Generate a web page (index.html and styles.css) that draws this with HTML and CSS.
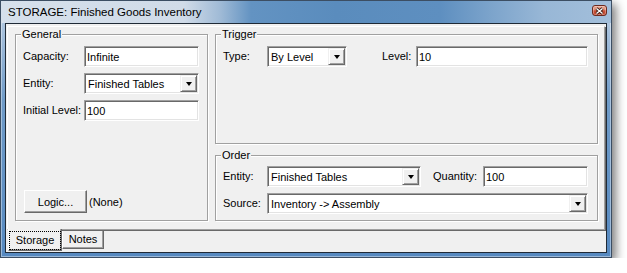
FILE: index.html
```html
<!DOCTYPE html>
<html lang="en">
<head>
<meta charset="UTF-8">
<meta name="viewport" content="width=device-width, initial-scale=1.0">
<title>STORAGE: Finished Goods Inventory</title>
<link rel="stylesheet" href="styles.css">
</head>
<body>
<div class="window">
  <div class="titlebar">
    <span class="title">STORAGE: Finished Goods Inventory</span>
    <div class="close-btn">
      <svg width="9" height="8" viewBox="0 0 9 8">
        <path d="M1.5 1.5 L7.5 6.5 M7.5 1.5 L1.5 6.5" stroke="#3a1a12" stroke-width="3" fill="none"/>
        <path d="M1.5 1.5 L7.5 6.5 M7.5 1.5 L1.5 6.5" stroke="#fff" stroke-width="1.4" fill="none"/>
      </svg>
    </div>
  </div>

  <div class="client">
    <div class="page">
      <div class="group general">
        <span class="group-label">General</span>
        <div class="row">
          <label class="lbl lbl-general">Capacity:</label>
          <input class="field" type="text" value="Infinite" style="width: 115px">
        </div>
        <div class="row">
          <label class="lbl lbl-general">Entity:</label>
          <div class="combo" style="width: 115px">
            <span class="combo-text">Finished Tables</span>
            <span class="combo-btn"><i class="arrow"></i></span>
          </div>
        </div>
        <div class="row">
          <label class="lbl lbl-general">Initial Level:</label>
          <input class="field" type="text" value="100" style="width: 115px">
        </div>
        <div class="logic-row">
          <button class="btn">Logic...</button>
          <span class="none-text">(None)</span>
        </div>
      </div>

      <div class="right-col">
        <div class="group trigger">
          <span class="group-label">Trigger</span>
          <div class="row">
            <label class="lbl lbl-short">Type:</label>
            <div class="combo" style="width: 80px">
              <span class="combo-text">By Level</span>
              <span class="combo-btn"><i class="arrow"></i></span>
            </div>
            <label class="lbl lbl-level">Level:</label>
            <input class="field" type="text" value="10" style="width: 172px">
          </div>
        </div>

        <div class="group order">
          <span class="group-label">Order</span>
          <div class="row">
            <label class="lbl lbl-short">Entity:</label>
            <div class="combo" style="width: 154px">
              <span class="combo-text">Finished Tables</span>
              <span class="combo-btn"><i class="arrow"></i></span>
            </div>
            <label class="lbl lbl-qty">Quantity:</label>
            <input class="field" type="text" value="100" style="width: 105px">
          </div>
          <div class="row">
            <label class="lbl lbl-short">Source:</label>
            <div class="combo" style="width: 321px">
              <span class="combo-text">Inventory -&gt; Assembly</span>
              <span class="combo-btn"><i class="arrow"></i></span>
            </div>
          </div>
        </div>
      </div>
    </div>

    <div class="tabs">
      <div class="tab active"><span class="focus">Storage</span></div>
      <div class="tab">Notes</div>
    </div>
  </div>
</div>
</body>
</html>
```

FILE: styles.css
```css
* {
  box-sizing: border-box;
}
body {
  margin: 0;
  background-color: #fff;
  font-family: "Liberation Sans", Arial, sans-serif;
  font-size: 11px;
  color: #000;
}
.window {
  width: 612px;
  height: 258px;
  border: 1px solid #3c4e63;
  background: linear-gradient(180deg, #c4d4e6 0, #a6c0dc 30px, #6f9bc8 100px, #5689c0 100%);
  box-shadow: inset 0 0 0 1px rgba(255, 255, 255, 0.4), 4px 4px 9px rgba(0, 0, 0, 0.5);
  display: flex;
  flex-direction: column;
}
.titlebar {
  height: 22px;
  display: flex;
  align-items: flex-start;
  padding: 0 4px 0 7px;
  background: linear-gradient(90deg, #d6e0eb 0, #d0dbe8 30%, #9fbad6 36%, #6393c2 41%, #5a8cbd 55%, #5e8fc0 72%, #7ba3cb 80%, #98b7d6 89%, #a3bfdb 100%);
}
.title {
  font-size: 11.5px;
  line-height: 22px;
  color: #000;
}
.close-btn {
  margin: 4px 0 0 auto;
  width: 15px;
  height: 11px;
  border: 1px solid #6e2a1f;
  border-radius: 3px;
  background: linear-gradient(180deg, #eaa895 0, #dc8a72 45%, #c95037 52%, #c0452d 100%);
  box-shadow: inset 0 0 0 1px rgba(255, 255, 255, 0.3);
  display: flex;
  align-items: center;
  justify-content: center;
}
.client {
  flex: 1;
  margin: 0 4px 4px;
  border: 1px solid #1f2a36;
  background-color: #f0f0f0;
  display: flex;
  flex-direction: column;
}
.page {
  height: 204px;
  margin: 2px 1px 0;
  border: 1px solid;
  border-color: #fff #a0a0a0 #a0a0a0 #fff;
  box-shadow: 1px 1px 0 #696969;
  display: flex;
  gap: 7px;
  padding: 7px 0 0 7px;
}
.group {
  position: relative;
  border: 1px solid #a0a0a0;
  box-shadow: inset 1px 1px 0 #fff, 1px 1px 0 #fff;
  padding: 11px 0 0 7px;
}
.group-label {
  position: absolute;
  top: -7px;
  left: 5px;
  padding: 0 1px;
  line-height: 13px;
  background-color: #f0f0f0;
}
.general {
  width: 193px;
  height: 187px;
  display: flex;
  flex-direction: column;
}
.right-col {
  width: 383px;
  display: flex;
  flex-direction: column;
  gap: 11px;
}
.trigger {
  height: 110px;
}
.order {
  height: 66px;
  padding-top: 10px;
}
.row {
  display: flex;
  align-items: center;
  height: 21px;
  margin-bottom: 6px;
}
.lbl {
  line-height: 13px;
}
.lbl-general {
  width: 61px;
}
.lbl-short {
  width: 44px;
}
.lbl-level {
  width: 34px;
  margin-left: 35px;
}
.lbl-qty {
  width: 50px;
  margin-left: 12px;
}
.field {
  height: 21px;
  margin: 0;
  padding: 0 0 0 2px;
  border: 1px solid;
  border-color: #a0a0a0 #fff #fff #a0a0a0;
  box-shadow: inset 1px 1px 0 #696969, inset -1px -1px 0 #e3e3e3;
  background-color: #fff;
  font-family: inherit;
  font-size: 11px;
  color: #000;
  outline: none;
}
.combo {
  height: 21px;
  display: flex;
  align-items: center;
  padding: 1px;
  border: 1px solid;
  border-color: #a0a0a0 #fff #fff #a0a0a0;
  box-shadow: inset 1px 1px 0 #696969, inset -1px -1px 0 #e3e3e3;
  background-color: #fff;
}
.combo-text {
  flex: 1;
  padding-left: 2px;
  white-space: nowrap;
  overflow: hidden;
}
.combo-btn {
  width: 17px;
  height: 17px;
  border: 1px solid;
  border-color: #f0f0f0 #696969 #696969 #f0f0f0;
  box-shadow: inset 1px 1px 0 #fff, inset -1px -1px 0 #a0a0a0;
  background-color: #f0f0f0;
  display: flex;
  align-items: center;
  justify-content: center;
}
.arrow {
  width: 1px;
  height: 0;
  border-left: 3px solid transparent;
  border-right: 3px solid transparent;
  border-top: 4px solid #000;
  margin-top: 1px;
}
.logic-row {
  margin-top: auto;
  margin-bottom: 7px;
  display: flex;
  align-items: center;
}
.btn {
  width: 63px;
  height: 23px;
  margin: 0 0 0 1px;
  padding: 0;
  border: 1px solid;
  border-color: #fff #696969 #696969 #fff;
  box-shadow: inset -1px -1px 0 #a0a0a0;
  background-color: #f0f0f0;
  font-family: inherit;
  font-size: 11px;
  color: #000;
}
.none-text {
  margin-left: 2px;
}
.tabs {
  flex: 1;
  display: flex;
  align-items: flex-start;
  padding-left: 2px;
}
.tab {
  position: relative;
  height: 18px;
  width: 42px;
  margin-top: 1px;
  border-left: 1px solid #fff;
  border-right: 1px solid #696969;
  border-bottom: 1px solid #696969;
  box-shadow: inset -1px -1px 0 #a0a0a0;
  background-color: #f0f0f0;
  text-align: center;
  line-height: 17px;
}
.tab.active {
  width: 54px;
  height: 22px;
  margin-top: -1px;
  padding-top: 2px;
  display: flex;
}
.focus {
  flex: 1;
  border: 1px dotted #000;
  line-height: 17px;
}
```
